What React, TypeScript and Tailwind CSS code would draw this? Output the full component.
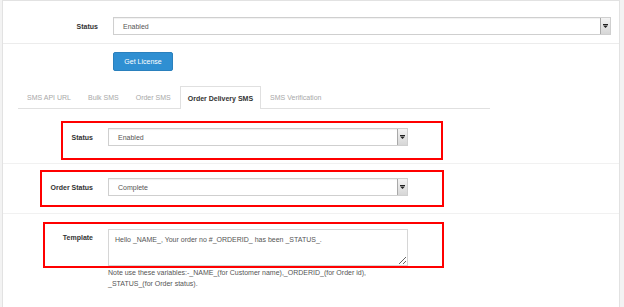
import React from 'react';

const tabs = ['SMS API URL', 'Bulk SMS', 'Order SMS', 'Order Delivery SMS', 'SMS Verification'];

const Arrow: React.FC = () => (
  <div className="flex h-full w-[10px] items-center justify-center border-l border-[#a9a9a9] bg-gradient-to-b from-[#f4f4f4] to-[#d6d6d6]">
    <svg width="5" height="4" viewBox="0 0 5 4">
      <rect x="0" y="0" width="5" height="1" fill="#222" />
      <path d="M0 1.5 H5 L2.5 4 Z" fill="#222" />
    </svg>
  </div>
);

const Select: React.FC<{ value: string; width: string }> = ({ value, width }) => (
  <div
    className={`flex h-[18px] ${width} items-center justify-between border border-[#cfcfcf] bg-white shadow-[inset_0_1px_1px_rgba(0,0,0,0.06)]`}
  >
    <span className="pl-[9px] text-[#555]">{value}</span>
    <Arrow />
  </div>
);

const RedBox: React.FC<{ className: string }> = ({ className }) => (
  <div className={`pointer-events-none absolute border-2 border-[#ff0000] ${className}`} />
);

export default function App() {
  return (
    <div
      className="h-[307px] w-[624px] overflow-hidden bg-[#f3f3f3] text-[7px] leading-[11px] text-[#333]"
      style={{ fontFamily: '"Liberation Sans", Arial, sans-serif' }}
    >
      <div className="ml-[2px] h-full w-[618px] border-x border-t border-[#e2e2e2] bg-white">
        {/* Top status row */}
        <div className="box-border flex h-[43px] items-start gap-[15px] border-b border-[#ececec] pt-[16px]">
          <div className="flex h-[18px] w-[95px] items-center justify-end font-bold">Status</div>
          <Select value="Enabled" width="w-[498px]" />
        </div>

        {/* License button */}
        <div className="mt-[8px] pl-[110px]">
          <button className="h-[19px] w-[60px] rounded-[2px] border border-[#2a80bd] bg-[#2f8fd2] text-[7px] text-white">
            Get License
          </button>
        </div>

        {/* Tabs */}
        <div className="ml-[15px] mt-[15px] flex h-[23px] w-[472px] items-stretch border-b border-[#e0e0e0]">
          {tabs.map((tab) =>
            tab === 'Order Delivery SMS' ? (
              <div
                key={tab}
                className="-mb-px ml-px flex items-center border border-b-0 border-[#e0e0e0] bg-white px-[7px] font-bold text-[#333]"
              >
                {tab}
              </div>
            ) : (
              <div key={tab} className="ml-px flex items-center px-[8px] text-[#a8a8a8]">
                {tab}
              </div>
            )
          )}
        </div>

        {/* Status */}
        <div className="relative box-border flex h-[55px] items-start gap-[15px] border-b border-[#f1f1f1] pt-[19px]">
          <div className="flex h-[18px] w-[90px] items-center justify-end font-bold">Status</div>
          <Select value="Enabled" width="w-[300px]" />
          <RedBox className="left-[58px] top-[12px] h-[39px] w-[382px]" />
        </div>

        {/* Order status */}
        <div className="relative box-border flex h-[50px] items-start gap-[15px] border-b border-[#f1f1f1] pt-[14px]">
          <div className="flex h-[18px] w-[90px] items-center justify-end font-bold">Order Status</div>
          <Select value="Complete" width="w-[300px]" />
          <RedBox className="left-[37px] top-[6px] h-[37px] w-[404px]" />
        </div>

        {/* Template */}
        <div className="relative flex items-start gap-[15px] pt-[15px]">
          <div className="w-[90px] pt-[3px] text-right font-bold">Template</div>
          <div className="w-[300px]">
            <textarea
              readOnly
              defaultValue="Hello _NAME_, Your order no #_ORDERID_ has been _STATUS_."
              className="block h-[37px] w-[300px] resize-y border border-[#d6d6d6] px-[6px] py-[4px] text-[7px] leading-[11px] text-[#555] outline-none"
            />
            <p className="mt-[1px] text-[#555]">
              Note use these variables:-_NAME_(for Customer name),_ORDERID_(for Order id),
              <br />
              _STATUS_(for Order status).
            </p>
          </div>
          <RedBox className="left-[40px] top-[8px] h-[46px] w-[401px]" />
        </div>
      </div>
    </div>
  );
}
